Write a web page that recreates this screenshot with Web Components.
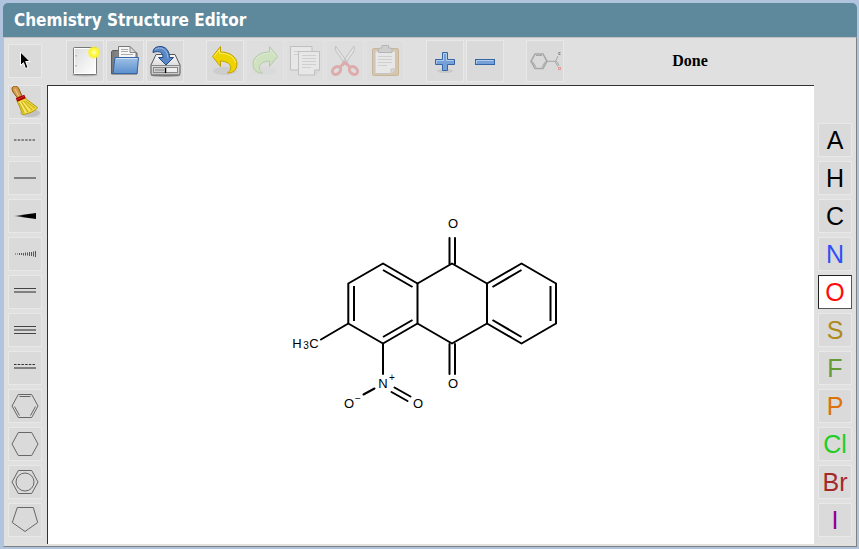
<!DOCTYPE html>
<html lang="en">
<head>
<meta charset="utf-8">
<title>Chemistry Structure Editor</title>
<style>
  html { height: 100%; background: #b0c4de; }
  body { margin: 0; min-height: 100%; display: flex; font-family: "Liberation Sans", Arial, sans-serif; }
</style>
</head>
<body>
<chem-editor></chem-editor>

<template id="title-bar">
  <style>
    :host { display: block; background: #5e889c; color: #fff; border-radius: 5px 5px 0 0; padding: 6px 11px; }
    h1 { margin: 0; font: bold 17px/22px "DejaVu Sans Condensed", Tahoma, sans-serif; }
  </style>
  <h1><slot></slot></h1>
</template>

<template id="icon-button">
  <style>
    :host { display: block; width: 34px; height: 34px; }
    :host([wide]) { width: 38px; height: 42px; }
    button { display: block; box-sizing: border-box; width: 100%; height: 100%; margin: 0; padding: 0; border: 1px solid #e8e8e8; background: #dadada; }
    button:disabled { opacity: .3; }
    svg { display: block; width: 100%; height: 100%; }
  </style>
  <button type="button"></button>
</template>

<template id="atom-button">
  <style>
    :host { display: block; width: 34px; height: 34px; }
    button { display: block; box-sizing: border-box; width: 100%; height: 100%; margin: 0; padding: 0; border: 1px solid #e8e8e8; background: #dadada; color: var(--atom, #000); font: 25px/32px "Liberation Sans", Arial, sans-serif; text-align: center; white-space: nowrap; }
    :host([selected]) button { background: #fff; border-color: #222 #555 #555 #222; }
  </style>
  <button type="button"><slot></slot></button>
</template>

<template id="tool-bar">
  <style>
    :host { display: flex; align-items: flex-start; gap: 2px; padding-top: 2px; }
    ::slotted([group]) { margin-left: 20px; }
  </style>
  <slot></slot>
</template>

<template id="tool-rail">
  <style>
    :host { display: flex; flex-direction: column; gap: 4px; }
  </style>
  <slot></slot>
</template>

<template id="status-text">
  <style>
    :host { display: block; flex: 1; text-align: center; color: #000; font: bold 16px/18px "Liberation Serif", "Times New Roman", serif; padding: 12px 0 0; }
  </style>
  <output><slot></slot></output>
</template>

<template id="structure-canvas">
  <style>
    :host { display: flex; align-items: center; justify-content: center; background: #fff; border: solid #333; border-width: 1px 0 0 1px; }
    svg { display: block; }
    .bonds { fill: none; stroke: #000; stroke-width: 2; stroke-linecap: round; stroke-linejoin: round; }
    text { font: 13px "Liberation Sans", Arial, sans-serif; fill: #000; text-anchor: middle; }
    .small { font-size: 10px; }
  </style>
  <svg width="280" height="204" viewBox="291 213 280 204" role="img" aria-label="2-methyl-1-nitroanthraquinone">
    <g class="bonds">
      <path d="M383 263.5 417.5 283.5V323.5L383 343.5 348.3 323.5V283.5Z"/>
      <path d="M417.5 283.5 452 263.5 487 283.5V323.5L452 343.5 417.5 323.5"/>
      <path d="M487 283.5 521.5 263.5 556 283.5V323.5L521.5 343.5 487 323.5"/>
      <path stroke-linecap="butt" d="M354 286V321M383 270 412.5 287M383 337 412.5 320M492.5 287 521.5 270M550.5 286V321M492.5 320 521.5 337"/>
      <path d="M449.5 238V264M455 238V264M449.5 344V374M455 344V374"/>
      <path d="M348.3 323.5 321 339.5M383 343.5V374"/>
      <path d="M374.5 388.5 363.5 394.5M394.5 387.5 410.500 396.500M391.500 392 407.500 401"/>
    </g>
    <text x="453" y="228">O</text>
    <text x="453" y="388">O</text>
    <text x="297" y="348">H</text><text class="small" x="306" y="349">3</text><text x="314" y="348">C</text>
    <text x="383" y="388">N</text><text class="small" x="392" y="381">+</text>
    <text x="349" y="408">O</text><text class="small" x="358" y="402">−</text>
    <text x="418" y="408">O</text>
  </svg>
</template>

<template id="chem-editor">
  <style>
    :host { flex: 1; display: flex; flex-direction: column; margin: 3px 2px 2px 3px; }
    main { flex: 1; display: grid; grid-template-columns: 34px 1fr 34px; grid-template-rows: 47px 1fr; background: #e0e0e0; border: 1px solid; border-color: #c0c0c0 #808080 #808080 #c0c0c0; padding: 0 4px 2px; }
    .pointer { margin-top: 6px; }
    tool-bar { margin-left: 24px; margin-right: 4px; }
    structure-canvas { margin: 0 4px 0 5px; }
    .atoms { grid-column: 3; padding-top: 38px; }
    tool-bar { grid-column: 2; }
    .tools { grid-column: 1; }
  </style>
  <title-bar>Chemistry Structure Editor</title-bar>
  <main>
    <icon-button class="pointer" icon="pointer" label="Select"></icon-button>
    <tool-bar role="toolbar">
      <icon-button wide icon="new" label="New"></icon-button>
      <icon-button wide icon="open" label="Open"></icon-button>
      <icon-button wide icon="save" label="Save"></icon-button>
      <icon-button wide group icon="undo" label="Undo"></icon-button>
      <icon-button wide icon="redo" label="Redo" disabled></icon-button>
      <icon-button wide icon="copy" label="Copy" disabled></icon-button>
      <icon-button wide icon="cut" label="Cut" disabled></icon-button>
      <icon-button wide icon="paste" label="Paste" disabled></icon-button>
      <icon-button wide group icon="plus" label="Zoom in"></icon-button>
      <icon-button wide icon="minus" label="Zoom out"></icon-button>
      <icon-button wide group icon="template" label="Templates"></icon-button>
      <status-text>Done</status-text>
    </tool-bar>
    <tool-rail class="tools">
      <icon-button icon="broom" label="Clean up"></icon-button>
      <icon-button icon="dotted" label="Any bond"></icon-button>
      <icon-button icon="single" label="Single bond"></icon-button>
      <icon-button icon="wedge" label="Wedge bond"></icon-button>
      <icon-button icon="hash" label="Hashed bond"></icon-button>
      <icon-button icon="double" label="Double bond"></icon-button>
      <icon-button icon="triple" label="Triple bond"></icon-button>
      <icon-button icon="aromatic" label="Aromatic bond"></icon-button>
      <icon-button icon="benzene" label="Benzene"></icon-button>
      <icon-button icon="hexane" label="Cyclohexane"></icon-button>
      <icon-button icon="ring" label="Aromatic ring"></icon-button>
      <icon-button icon="pentane" label="Cyclopentane"></icon-button>
    </tool-rail>
    <structure-canvas></structure-canvas>
    <tool-rail class="atoms">
      <atom-button>A</atom-button>
      <atom-button>H</atom-button>
      <atom-button>C</atom-button>
      <atom-button style="--atom:#304ff7">N</atom-button>
      <atom-button selected style="--atom:#ff0d0d">O</atom-button>
      <atom-button style="--atom:#b08a1c">S</atom-button>
      <atom-button style="--atom:#659b37">F</atom-button>
      <atom-button style="--atom:#dc7209">P</atom-button>
      <atom-button style="--atom:#1fce1f">Cl</atom-button>
      <atom-button style="--atom:#a62929">Br</atom-button>
      <atom-button style="--atom:#940094">I</atom-button>
    </tool-rail>
  </main>
</template>

<script>
const hexagon = '<path d="M4 17 10.300 5.500H23.700L30 17 23.700 28.500H10.300Z"/>';
const outline = body => `<g fill="none" stroke="#666" stroke-width="1">${body}</g>`;
const curvedArrow = (fill, light, edge) => `
  <ellipse cx="19" cy="31" rx="12" ry="4" fill="#999" opacity=".2"/>
  <path d="M6.500 16.500 14.500 6.500V12C24 12 31 17 31 24 31 30 27 33 21.500 33 27 29.500 26 21.500 14.500 21V26.500Z" fill="${fill}" stroke="${edge}"/>
  <path d="M8 16.500 13.500 9.500V13.200C22 13 28.500 17 29.500 23" fill="none" stroke="${light}"/>`;
const lines = (x1, x2, ys) => `<path stroke="#aaa" d="${ys.map(y => `M${x1} ${y}H${x2}`).join('')}"/>`;

const ICONS = {
  pointer: '<path d="M12.500 8V21.500L15.500 18.700 17.500 24.500 20 23.500 17.700 17.500H22Z" fill="#000" stroke="#fff" stroke-width="1"/>',
  new: `<defs><linearGradient id="p" x2="1" y2="1"><stop stop-color="#dedede"/><stop offset="1" stop-color="#fff"/></linearGradient><radialGradient id="s"><stop stop-color="#fff"/><stop offset=".3" stop-color="#fffb60"/><stop offset=".72" stop-color="#fcf32b"/><stop offset="1" stop-color="#fcf32b" stop-opacity=".15"/></radialGradient></defs>
    <ellipse cx="19" cy="35" rx="13" ry="1.500" fill="#888" opacity=".5"/>
    <rect x="7.500" y="7.500" width="23" height="27" rx="1" fill="#fff" stroke="#777"/><rect x="9" y="9" width="20" height="24" fill="url(#p)"/>
    <path d="M10 15v1.500M10 25v1.500" stroke="#999"/><circle cx="28" cy="12.500" r="6.500" fill="url(#s)"/>`,
  open: `<defs><linearGradient id="b" x2="0" y2="1"><stop stop-color="#a0c2e8"/><stop offset="1" stop-color="#5c8fcd"/></linearGradient><linearGradient id="g" x2="1"><stop stop-color="#777"/><stop offset="1" stop-color="#bbb"/></linearGradient></defs>
    <path d="M5.500 34V11.500L7 10.500H14L16 13H31V34Z" fill="url(#g)" stroke="#5c5c5c"/>
    <path d="M12.500 21V6.500H24L30 12.500V21Z" fill="#f6f6f6" stroke="#777"/><path d="M24 6.500V12.500H30Z" fill="#ddd" stroke="#888"/>
    ${lines(15, 22, [9.5, 11.5])}${lines(15, 27, [14.5])}
    <path d="M9 17.500H32.500L31 33.500H7Z" fill="url(#b)" stroke="#3465a4"/><path d="M10 18.500H31.300" stroke="#cfe0f4"/>`,
  save: `<defs><linearGradient id="d" x2="0" y2="1"><stop stop-color="#f8f8f8"/><stop offset="1" stop-color="#c6c6c6"/></linearGradient></defs>
    <ellipse cx="19.500" cy="35.500" rx="15" ry="1.500" fill="#777" opacity=".6"/>
    <path d="M10 14.500H29L34 25V33.500Q34 35 32.500 35H6.500Q5 35 5 33.500V25Z" fill="url(#d)" stroke="#555"/>
    <path d="M5.500 25.500H33.500" stroke="#888"/><rect x="7.500" y="27.500" width="24" height="5" fill="#eee" stroke="#888"/><path d="M8.500 30H18" stroke="#aaa" stroke-width="3"/><path d="M19.500 28V33" stroke="#000" stroke-width="1.500"/>
    <path d="M7 12.500C7 8.500 10 6.500 14 6.500 20 6.500 23.500 11 23.500 17.500H27.500L20 25 12.500 17.500H17C17 13 14 10 7 12.500Z" fill="#5a88c4" stroke="#204a87"/><path d="M9 9.500C15 5.500 21.500 10 22 18" fill="none" stroke="#9dbce2"/>`,
  undo: curvedArrow('#edd400', '#fcee70', '#c4a000'),
  redo: `<g transform="translate(38 0) scale(-1 1)">${curvedArrow('#a8e878', '#d9f9bd', '#4e9a1e')}</g>`,
  copy: `<g fill="#f8f8f8" stroke="#777"><path d="M4.500 6.500H26V30H4.500Z"/>${lines(8, 22, [11.5, 14.5])}<path d="M12.500 11.500H33.500V30L28.500 35H12.500Z"/></g>${lines(16, 30, [15.5, 18.5, 21.5, 24.5])}${lines(16, 25, [27.5])}<path d="M28.500 35V30H33.500" fill="#ccc" stroke="#777"/>`,
  cut: `<path d="M9.500 6Q8.500 10 10.500 12L20 25 22 23ZM28 6Q29 10 27.500 12L18 25 16 23Z" fill="#eee" stroke="#777"/>
    <g fill="none" stroke="#d83535" stroke-width="3"><ellipse cx="10.500" cy="30.500" rx="4.500" ry="3.500" transform="rotate(-40 10.500 30.500)"/><ellipse cx="27.500" cy="30.500" rx="4.500" ry="3.500" transform="rotate(40 27.500 30.500)"/><path d="M14 27 19 22.500 24 27"/></g>`,
  paste: `<rect x="6.500" y="8.500" width="26" height="27" rx="1.500" fill="#c98b32" stroke="#8f5902"/><path d="M9 11H29.500V29L25 33.500H9Z" fill="#fafafa" stroke="#888"/>${lines(12, 26, [16.5, 19.5, 22.5])}${lines(12, 21, [25.5])}<path d="M25 33.500V29H29.500" fill="#ccc" stroke="#888"/>
    <path d="M12.500 12.500V9.500Q12.500 8 14.500 8H16V5.500H22.500V8H24Q26 8 26 9.500V12.500Z" fill="#aaa" stroke="#555"/>`,
  plus: `<ellipse cx="19" cy="31" rx="8" ry="2" fill="#999" opacity=".25"/><path d="M16.500 12.500H21.500V19.500H28.500V24.500H21.500V30.500H16.500V24.500H9.500V19.500H16.500Z" fill="#75a1d8" stroke="#3465a4"/><path d="M17.500 21V13.500H20.500V20.500H27.500M10.500 23.500V20.500H17" fill="none" stroke="#b2cdec"/>`,
  minus: '<rect x="9.500" y="19.500" width="19" height="5" fill="#75a1d8" stroke="#3465a4"/><path d="M10.500 23.500V20.500H27.500" fill="none" stroke="#b2cdec"/>',
  template: `<g fill="none" stroke="#a6a6a6"><path stroke-width="1.500" d="M5 21.300 9 14H17L21 21.300 17 28.500H9Z"/><path d="M10 15.500H16M6.500 21.500 10 27M19.500 21.500 16 27M21 21.300H29.500L32 16M29 21.500 32 26.500M30.500 21 33 25.500"/><path stroke="#888" d="M34.500 12.500H32.800V14.500H34.500"/><rect x="32.500" y="27.500" width="2" height="2" stroke="#e59a9a"/></g>`,
  broom: `<ellipse cx="22" cy="28" rx="10" ry="4" fill="#888" opacity=".3"/>
    <path d="M4 4C4 .5 9 .5 10.500 3L14 11 9.500 13 5 7Z" fill="#d29a4e" stroke="#8f5902"/><path d="M7 4 10.500 11" stroke="#f1cd94"/>
    <path d="M9 16 17 12.500C20 16 25 19 29.500 22.500 28 26 20 29 14.500 29.500 13 25 11 20 9 16Z" fill="#edd83c" stroke="#b69a0c"/>
    <path d="M11 17.500 16 28M13.500 17 20 27M15.500 16 24 25M17.500 16 27 23" fill="none" stroke="#c4a818"/><path d="M12 17 18 28M15 17 22 26" stroke="#fff08a" fill="none"/>
    <path d="M8.500 15 17 11.500" stroke="#a40000" stroke-width="4"/><path d="M9 14.500 16 11.500" stroke="#dc3030"/>`,
  dotted: '<path d="M6 17H28" stroke="#858585" stroke-width="2" stroke-dasharray="2.500 1.200"/>',
  single: '<path d="M6 17H28" stroke="#808080" stroke-width="2"/>',
  wedge: '<defs><linearGradient id="w" x2="1"><stop stop-color="#888"/><stop offset=".45"/></linearGradient></defs><path d="M6 17 28 14V20Z" fill="url(#w)"/>',
  hash: '<path fill="none" stroke="#555" d="M7.500 16.500v1M9.500 16.500v1M11.500 16v2M13.500 16v2M15.500 16v2.500M17.500 15.500v3M19.500 15.500v3M21.500 15v4M23.500 15v4M25.500 14.500v5M27.500 14v6"/>',
  double: '<path d="M6 13.500H28" stroke="#444"/><path d="M6 17H28" stroke="#808080" stroke-width="2"/>',
  triple: '<path d="M6 13.500H28M6 20.500H28" stroke="#444"/><path d="M6 17H28" stroke="#808080" stroke-width="2"/>',
  aromatic: '<path d="M6 13.500H28" stroke="#333" stroke-dasharray="2.500 1.200"/><path d="M6 17H28" stroke="#808080" stroke-width="2"/>',
  benzene: outline(hexagon + '<path d="M11.500 7.500H22.500M6.500 17.500 11.500 26.500M27.500 17.500 22.500 26.500"/>'),
  hexane: outline(hexagon),
  ring: outline(hexagon + '<circle cx="17" cy="17" r="9"/>'),
  pentane: outline('<path d="M9.300 4.500H25.300L29.700 19.500 17 28.500 4.300 19.500Z"/>')
};

class TemplateElement extends HTMLElement {
  constructor() {
    super();
    this.attachShadow({ mode: 'open' })
      .append(document.getElementById(this.localName).content.cloneNode(true));
  }
}

class IconButton extends TemplateElement {
  connectedCallback() {
    const button = this.shadowRoot.querySelector('button');
    const box = this.hasAttribute('wide') ? '1 1 36 40' : '1 1 32 32';
    button.innerHTML = `<svg viewBox="${box}" aria-hidden="true">${ICONS[this.getAttribute('icon')]}</svg>`;
    button.setAttribute('aria-label', this.getAttribute('label'));
    button.disabled = this.hasAttribute('disabled');
  }
}

class AtomButton extends TemplateElement {
  connectedCallback() {
    this.shadowRoot.querySelector('button').setAttribute('aria-pressed', this.hasAttribute('selected'));
  }
}

customElements.define('icon-button', IconButton);
customElements.define('atom-button', AtomButton);
for (const name of ['title-bar', 'tool-bar', 'tool-rail', 'status-text', 'structure-canvas', 'chem-editor']) {
  customElements.define(name, class extends TemplateElement {});
}
</script>
</body>
</html>
